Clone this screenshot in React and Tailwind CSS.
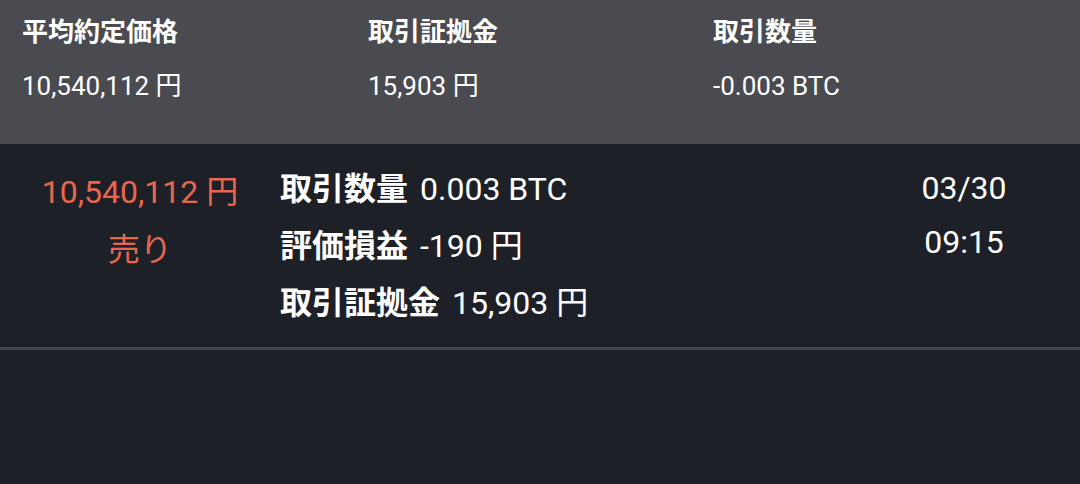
import React from "react";

const font = { fontFamily: "Roboto, 'Noto Sans CJK JP', sans-serif" };

const Summary = ({ label, value }) => (
  <div className="flex flex-col">
    <div className="text-[26px] font-bold leading-[32px] text-white">{label}</div>
    <div className="mt-[22px] text-[26px] leading-[32px] text-white">{value}</div>
  </div>
);

const Detail = ({ label, value }) => (
  <div className="flex items-baseline gap-[12px] leading-[57px] text-white">
    <span className="text-[32px] font-bold">{label}</span>
    <span className="text-[32px]">{value}</span>
  </div>
);

export default function App() {
  return (
    <div className="w-[1080px] h-[484px] bg-[#1e2027] overflow-hidden" style={font}>
      {/* top summary */}
      <div className="h-[144px] bg-[#4a4b51] grid grid-cols-[346px_345px_1fr] pl-[22px] pt-[16px]">
        <Summary label="平均約定価格" value="10,540,112 円" />
        <Summary label="取引証拠金" value="15,903 円" />
        <Summary label="取引数量" value="-0.003 BTC" />
      </div>

      {/* position row */}
      <div className="flex h-[206px] border-b-[3px] border-[#42444b]">
        <div className="w-[280px] flex flex-col items-center pt-[19px] text-[#e8674f] text-[32px] leading-[58px]">
          <span>10,540,112 円</span>
          <span>売り</span>
        </div>
        <div className="flex-1 flex flex-col pt-[17px]">
          <Detail label="取引数量" value="0.003 BTC" />
          <Detail label="評価損益" value="-190 円" />
          <Detail label="取引証拠金" value="15,903 円" />
        </div>
        <div className="w-[232px] flex flex-col items-center pt-[17px] text-white text-[32px] leading-[54px]">
          <span>03/30</span>
          <span>09:15</span>
        </div>
      </div>
    </div>
  );
}
